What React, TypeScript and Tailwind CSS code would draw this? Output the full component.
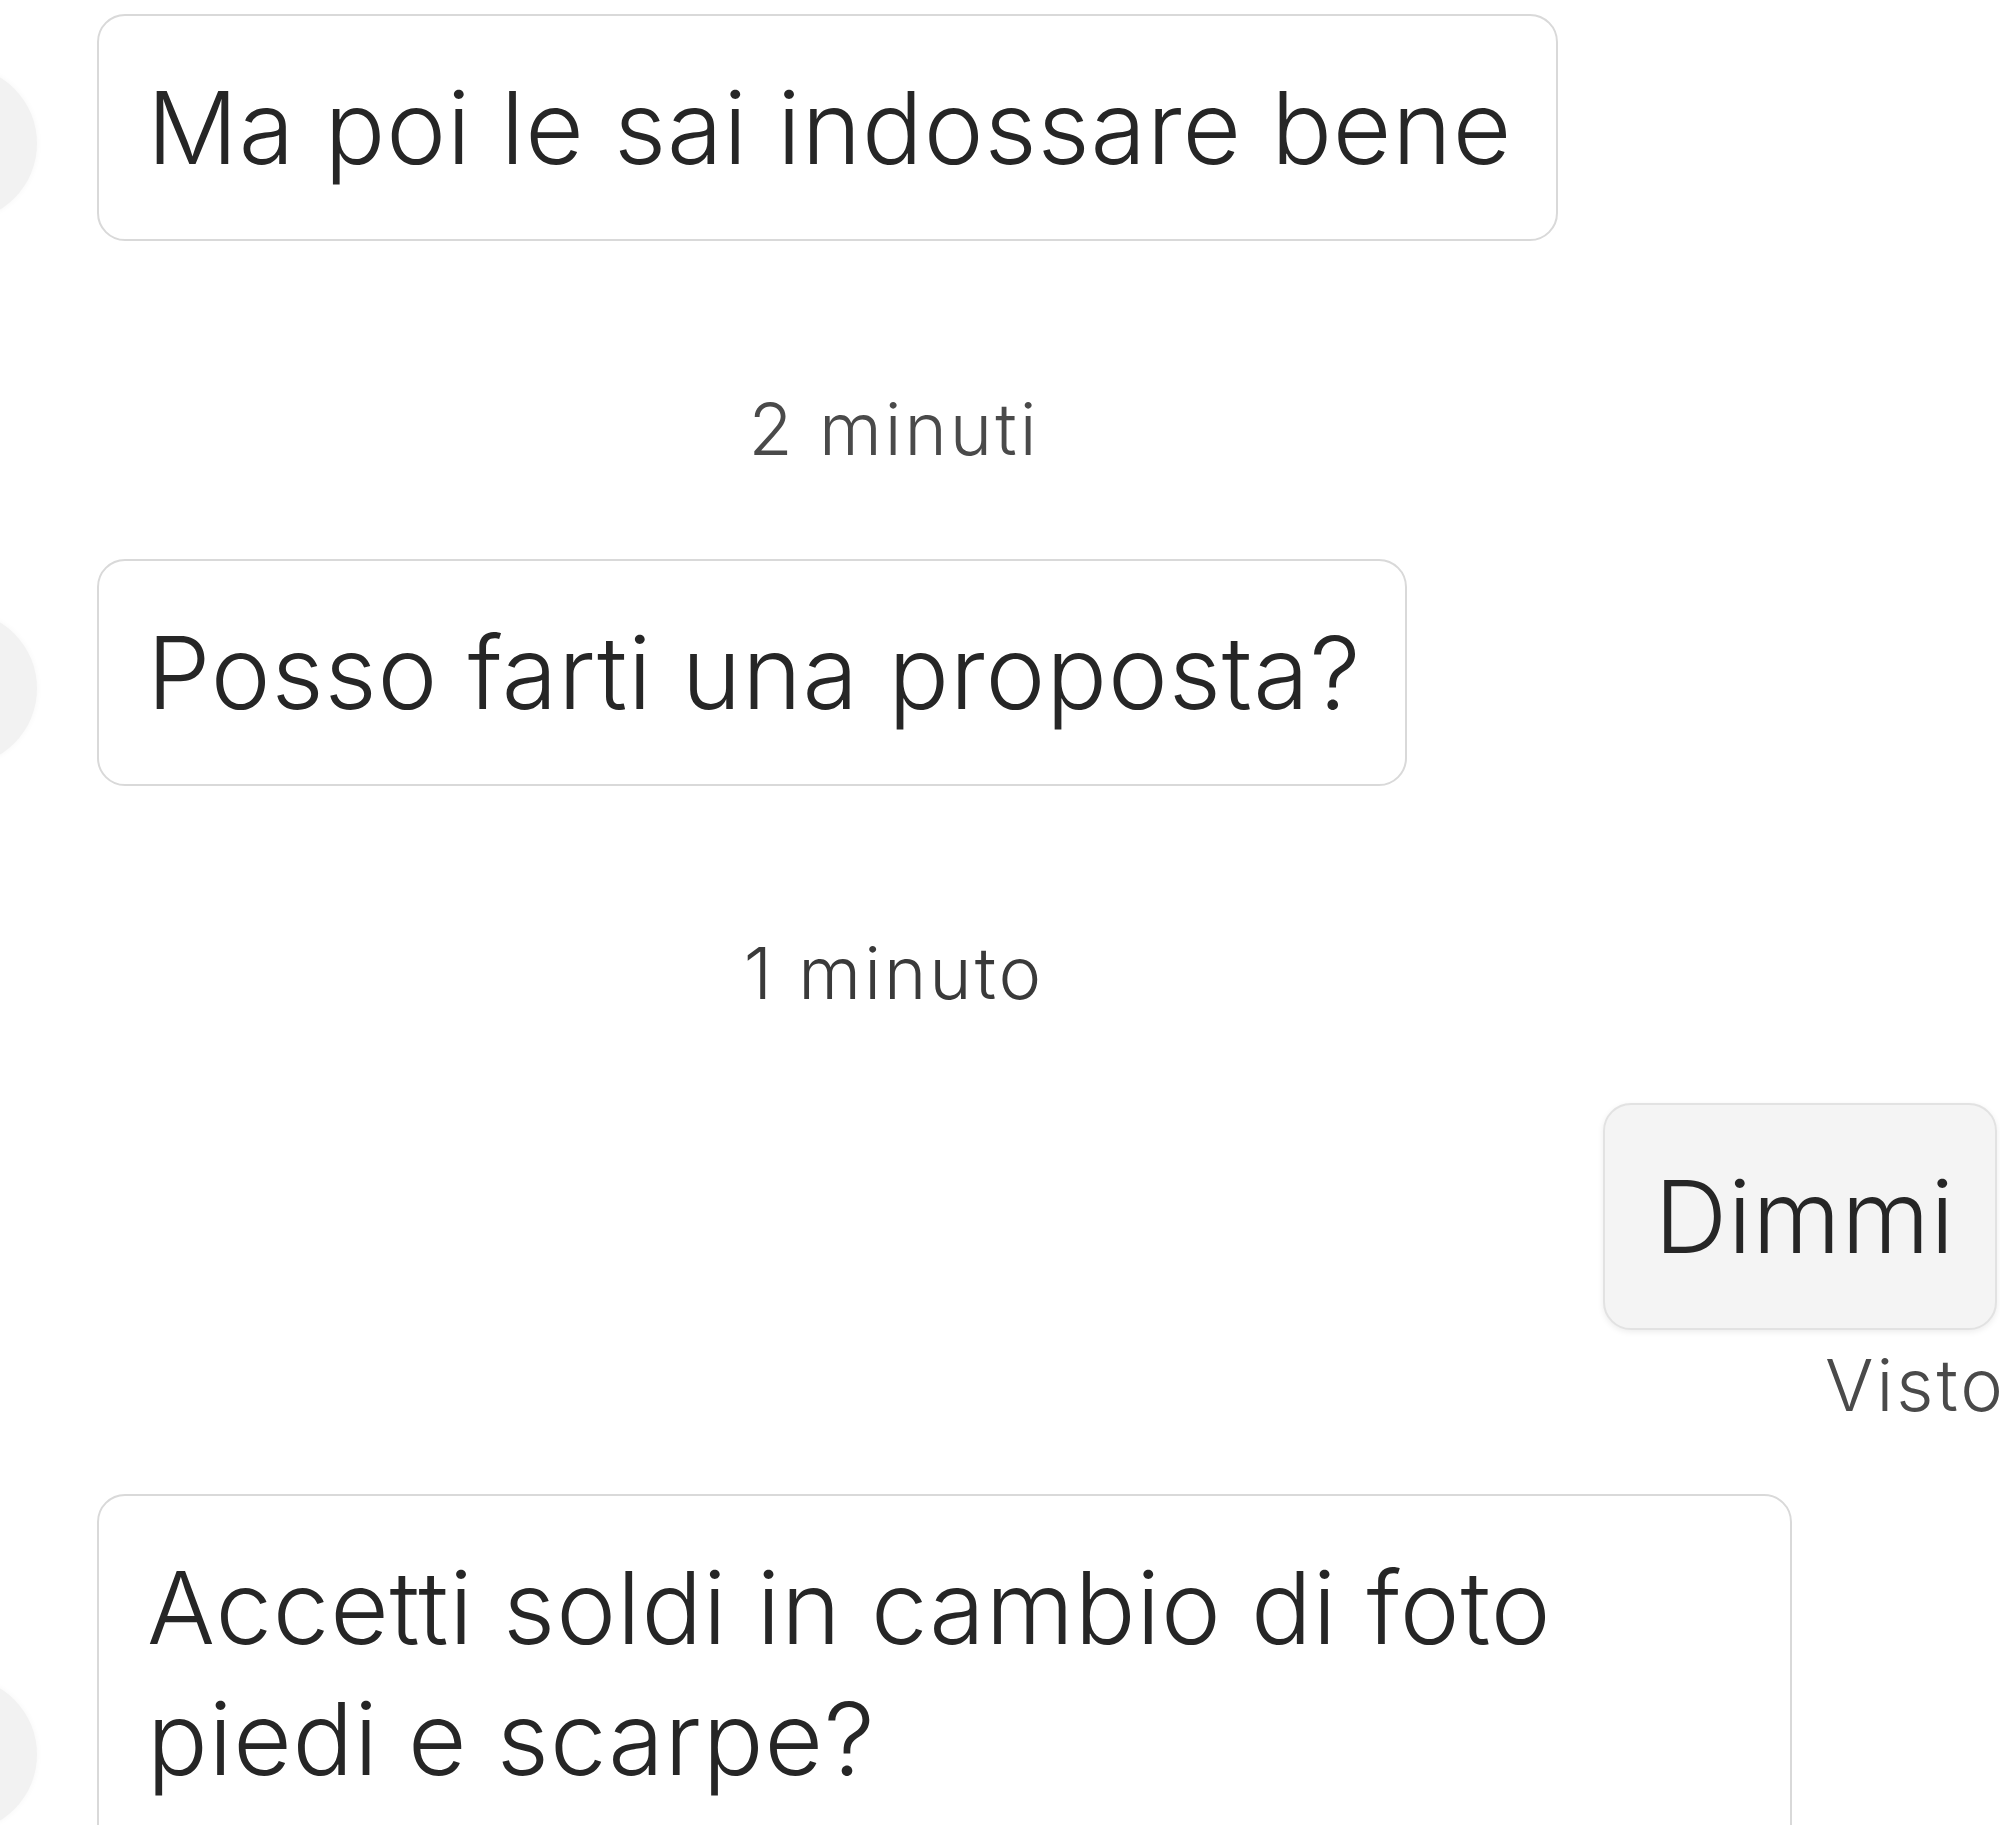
import React from 'react';

const font = { fontFamily: 'Inter, "Noto Sans", sans-serif' };

function Avatar() {
  return (
    <div className="ml-[-118px] mb-[20px] h-[155px] w-[155px] shrink-0 rounded-full bg-[#f2f2f2] shadow-[0_0_6px_rgba(0,0,0,0.04)]" />
  );
}

function Incoming({ children, className = '' }: { children: React.ReactNode; className?: string }) {
  return (
    <div className={`flex items-end gap-[60px] ${className}`}>
      <Avatar />
      <div className="max-w-[1695px] rounded-[28px] border-2 border-[#d9d9d9] bg-white py-[46px] pl-[48px] pr-[44px] text-[101px] font-[350] leading-[131px] tracking-[0.9px] text-[#262626]">
        {children}
      </div>
    </div>
  );
}

export default function App() {
  return (
    <div className="h-[1825px] w-[2000px] overflow-hidden bg-white pt-[14px]" style={font}>
      <Incoming>Ma poi le sai indossare bene</Incoming>

      <div className="mt-[145px] flex justify-center pr-[212px] text-[72px] font-[350] leading-[86px] tracking-[3px] text-[#4a4a4a]">
        2 minuti
      </div>

      <Incoming className="mt-[87px]">Posso farti una proposta?</Incoming>

      <div className="mt-[144px] flex justify-center pr-[212px] text-[72px] font-[350] leading-[86px] tracking-[3px] text-[#3a3a3a]">
        1 minuto
      </div>

      <div className="mt-[87px] flex justify-end pr-[3px]">
        <div className="rounded-[28px] border-2 border-[#e2e2e2] bg-[#f4f4f4] py-[46px] pl-[49px] pr-[40px] text-[101px] font-[350] leading-[131px] tracking-[0.9px] text-[#262626] shadow-[0_2px_6px_rgba(0,0,0,0.08)]">
          Dimmi
        </div>
      </div>

      <div className="mr-[-6px] mt-[12px] flex justify-end text-[72px] font-[350] leading-[86px] tracking-[3px] text-[#4a4a4a]">
        Visto
      </div>

      <Incoming className="mt-[66px]">Accetti soldi in cambio di foto piedi e scarpe?</Incoming>
    </div>
  );
}
